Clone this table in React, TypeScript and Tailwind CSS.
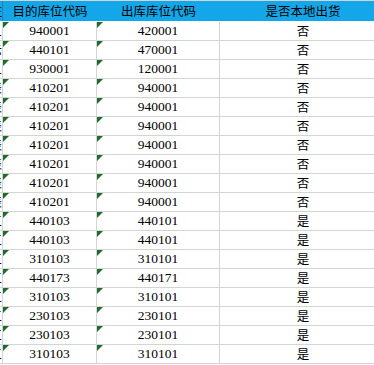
import React from "react";

const rows: [string, string, string, string][] = [
  ["1", "940001", "420001", "否"],
  ["示", "440101", "470001", "否"],
  ["1", "930001", "120001", "否"],
  ["表", "410201", "940001", "否"],
  ["表", "410201", "940001", "否"],
  ["表", "410201", "940001", "否"],
  ["表", "410201", "940001", "否"],
  ["表", "410201", "940001", "否"],
  ["表", "410201", "940001", "否"],
  ["表", "410201", "940001", "否"],
  ["三", "440103", "440101", "是"],
  ["三", "440103", "440101", "是"],
  ["三", "310103", "310101", "是"],
  ["三", "440173", "440171", "是"],
  ["三", "310103", "310101", "是"],
  ["三", "230103", "230101", "是"],
  ["三", "230103", "230101", "是"],
  ["三", "310103", "310101", "是"],
];

const cjk = { fontFamily: '"Noto Sans CJK SC", "Noto Sans", sans-serif' };
const num = { fontFamily: '"Liberation Serif", "Noto Sans CJK SC", serif' };

function Tri() {
  return (
    <div className="absolute left-0 top-0 w-0 h-0 border-t-[6px] border-t-[#1e6b2a] border-r-[6px] border-r-transparent" />
  );
}

export default function App() {
  return (
    <div className="w-[374px] h-[365px] overflow-hidden bg-white">
      <div className="w-[386px]">
        <div className="flex h-[22px] border-t border-t-[#d4d4d4] border-b border-b-white bg-[#13a6e8] text-black text-[12.5px] leading-none" style={cjk}>
          <div className="w-[3px] overflow-hidden flex justify-end items-center border-r border-r-[#3a7ca0] whitespace-nowrap">
            <span>注</span>
          </div>
          <div className="w-[94px] flex items-center justify-center">目的库位代码</div>
          <div className="w-[123px] flex items-center justify-center">出库库位代码</div>
          <div className="w-[166px] flex items-center justify-center">是否本地出货</div>
        </div>
        {rows.map((r, i) => (
          <div key={i} className="flex h-[19px] border-b border-b-[#d4d4d4] text-black leading-none">
            <div className="w-[3px] overflow-hidden flex justify-end items-center border-r border-r-[#d4d4d4] whitespace-nowrap text-[12.5px]" style={cjk}>
              <span>{r[0]}</span>
            </div>
            <div className="relative w-[94px] flex items-center justify-center border-r border-r-[#d4d4d4] text-[13.5px]" style={num}>
              <Tri />
              {r[1]}
            </div>
            <div className="relative w-[123px] flex items-center justify-center border-r border-r-[#d4d4d4] text-[13.5px]" style={num}>
              <Tri />
              {r[2]}
            </div>
            <div className="w-[166px] flex items-center justify-center text-[12.5px]" style={cjk}>
              {r[3]}
            </div>
          </div>
        ))}
      </div>
    </div>
  );
}
